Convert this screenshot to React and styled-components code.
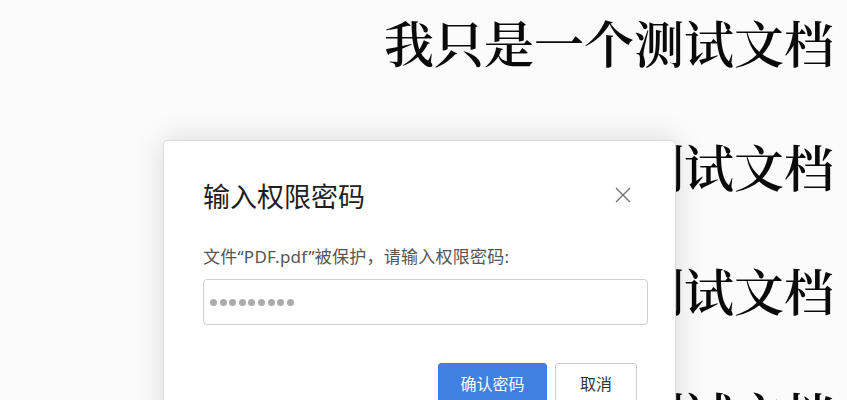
import React from "react";
import styled, { createGlobalStyle } from "styled-components";

const GlobalStyle = createGlobalStyle`
  html, body {
    margin: 0;
    padding: 0;
    background: #fbfbfb;
    overflow: hidden;
  }
  #root {
    width: 847px;
    height: 400px;
  }
`;

const Page = styled.div`
  position: relative;
  width: 847px;
  height: 400px;
  overflow: hidden;
  background: #fbfbfb;
`;

const Document = styled.div`
  display: flex;
  flex-direction: column;
  gap: 74px;
  padding: 16px 0 0 384px;
`;

const Line = styled.p`
  margin: 0;
  font-family: "Noto Serif CJK SC", "Noto Sans CJK SC", serif;
  font-size: 50px;
  line-height: 50px;
  font-weight: 600;
  color: #0a0a0a;
  white-space: nowrap;
`;

const Dialog = styled.div`
  position: absolute;
  left: 163px;
  top: 140px;
  width: 513px;
  height: 300px;
  box-sizing: border-box;
  padding: 40px 27px 20px 39px;
  background: #ffffff;
  border: 1px solid #dcdcdc;
  border-radius: 4px;
  box-shadow: 0 0 30px rgba(0, 0, 0, 0.14);
  font-family: "Noto Sans", "Noto Sans CJK SC", sans-serif;
  display: flex;
  flex-direction: column;
`;

const Header = styled.div`
  display: flex;
  align-items: center;
  justify-content: space-between;
  margin-right: 17px;
`;

const Title = styled.h2`
  margin: 0;
  font-family: "Noto Sans CJK SC", sans-serif;
  font-size: 27px;
  line-height: 30px;
  font-weight: 400;
  color: #1e1e1e;
`;

const Close = styled.button`
  border: 0;
  background: none;
  padding: 0;
  width: 16px;
  height: 16px;
  display: flex;
  margin-top: -3px;
  cursor: pointer;
`;

const Description = styled.p`
  margin: 36px 0 12px;
  font-size: 17px;
  line-height: 20px;
  letter-spacing: 0.25px;
  color: #555555;
  white-space: nowrap;
`;

const Field = styled.div`
  height: 46px;
  box-sizing: border-box;
  border: 1px solid #cfcfcf;
  border-radius: 4px;
  display: flex;
  align-items: center;
  gap: 2.6px;
  padding: 0 0 0 6px;
`;

const Dot = styled.span`
  width: 7px;
  height: 7px;
  border-radius: 50%;
  background: #ababab;
`;

const Actions = styled.div`
  display: flex;
  justify-content: flex-end;
  gap: 8px;
  margin: 38px 11px 0 0;
`;

const Button = styled.button`
  height: 40px;
  box-sizing: border-box;
  padding: 0;
  width: ${(p) => (p.$primary ? "109px" : "82px")};
  border-radius: 3px;
  border: 1px solid ${(p) => (p.$primary ? "#3d7fe0" : "#cccccc")};
  background: ${(p) => (p.$primary ? "#3f80e0" : "#ffffff")};
  color: ${(p) => (p.$primary ? "#ffffff" : "#333333")};
  font-family: "Noto Sans CJK SC", sans-serif;
  font-size: 16px;
  cursor: pointer;
`;

const lines = Array.from({ length: 4 });

export default function App() {
  return (
    <>
      <GlobalStyle />
      <Page>
        <Document>
          {lines.map((_, i) => (
            <Line key={i}>我只是一个测试文档</Line>
          ))}
        </Document>

        <Dialog>
          <Header>
            <Title>输入权限密码</Title>
            <Close aria-label="关闭">
              <svg width="16" height="16" viewBox="0 0 16 16">
                <path d="M1 1 L15 15 M15 1 L1 15" stroke="#707070" strokeWidth="1.3" fill="none" />
              </svg>
            </Close>
          </Header>
          <Description>文件“PDF.pdf”被保护，请输入权限密码:</Description>
          <Field>
            {Array.from({ length: 9 }).map((_, i) => (
              <Dot key={i} />
            ))}
          </Field>
          <Actions>
            <Button $primary>确认密码</Button>
            <Button>取消</Button>
          </Actions>
        </Dialog>
      </Page>
    </>
  );
}
